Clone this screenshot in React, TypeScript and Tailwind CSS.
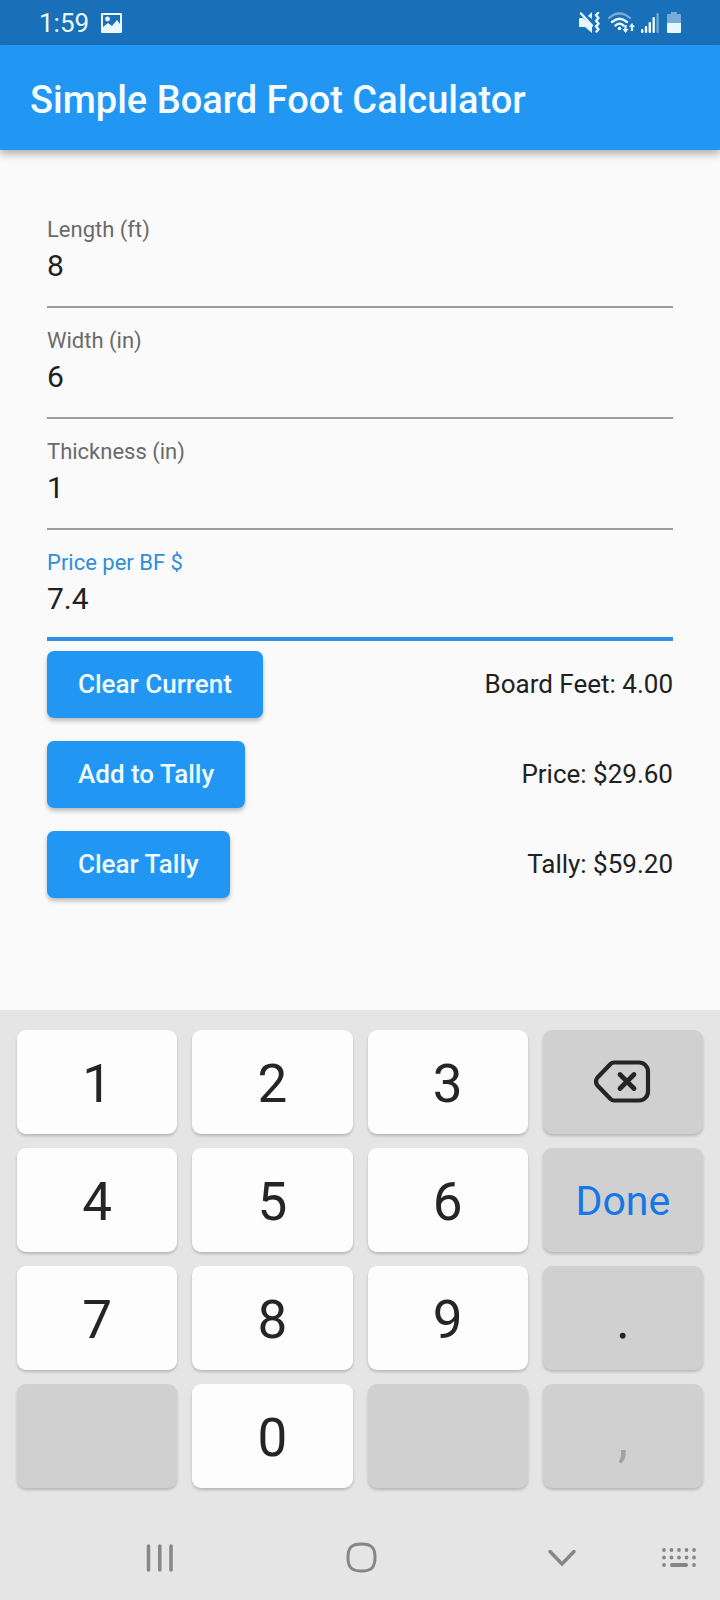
import { useState } from "react";
import clsx from "clsx";

const fields = ["Length (ft)", "Width (in)", "Thickness (in)", "Price per BF $"];

const keys = ["1", "2", "3", "back", "4", "5", "6", "Done", "7", "8", "9", ".", "", "0", "", ","];

function StatusBar() {
  return (
    <div className="flex h-[45px] items-center justify-between bg-[#1a70b8] pr-[39px] pl-[39px] text-[#e9f7fe]">
      <div className="flex items-center gap-3">
        <span className="text-[26px] leading-8">1:59</span>
        <svg width="21" height="20" viewBox="0 0 21 20" fill="currentColor" aria-hidden="true">
          <path
            fillRule="evenodd"
            d="M1 0h19a1 1 0 0 1 1 1v18a1 1 0 0 1-1 1H1a1 1 0 0 1-1-1V1a1 1 0 0 1 1-1Zm1 2v12l5-4 4 3 5-6 3 4V2H2Z"
          />
          <circle cx="6.5" cy="6" r="2.4" />
        </svg>
      </div>
      <div className="flex items-center gap-[6px]">
        {/* muted, vibrate */}
        <svg className="mr-[2px]" width="21" height="21" viewBox="0 0 21 21" fill="currentColor" aria-hidden="true">
          <path d="M1 6h3l9 8v7l-7-6H1a1 1 0 0 1-1-1V7a1 1 0 0 1 1-1ZM13 0v7L9 4Z" />
          <path
            d="M2 1.500l11 12M19 1l-2 2.200 2.500 2.800-2.500 2.800 2.500 2.800-2.500 2.800 2.500 2.800-2 2.300"
            fill="none"
            stroke="currentColor"
            strokeWidth="2.4"
            strokeLinecap="round"
            strokeLinejoin="round"
          />
        </svg>
        <svg width="27" height="22" viewBox="0 0 27 22" fill="none" stroke="currentColor" aria-hidden="true">
          <path d="M1 6q10.500-9 21 0" strokeWidth="2.200" strokeLinecap="round" opacity=".45" />
          <path d="M4 10q7.500-6.500 15 0M7.500 13.500q4-3.500 8 0" strokeWidth="2.400" strokeLinecap="round" />
          <circle cx="11.500" cy="16.500" r="1.800" fill="currentColor" stroke="none" />
          <path d="M17.500 13v6M24 19v-6" strokeWidth="2.200" />
          <path d="M14.500 17l3 4 3-4ZM21 15l3-4 3 4Z" fill="currentColor" stroke="none" />
        </svg>
        <svg width="18" height="20" viewBox="0 0 18 20" fill="currentColor" aria-hidden="true">
          <rect x="0" y="16" width="2.400" height="4" rx="1" />
          <rect x="3.800" y="13" width="2.400" height="7" rx="1" />
          <rect x="7.600" y="9" width="2.400" height="11" rx="1" />
          <rect x="11.500" y="4" width="2.400" height="16" rx="1" />
          <rect x="15.400" y="0" width="2.400" height="20" rx="1" opacity=".4" />
        </svg>
        <svg className="ml-[2px]" width="14" height="21" viewBox="0 0 14 21" fill="currentColor" aria-hidden="true">
          <path d="M4 0h6v2h3a1 1 0 0 1 1 1v8H0V3a1 1 0 0 1 1-1h3Z" opacity=".45" />
          <path d="M0 11h14v9a1 1 0 0 1-1 1H1a1 1 0 0 1-1-1Z" />
        </svg>
      </div>
    </div>
  );
}

function BackspaceIcon() {
  return (
    <svg
      width="58"
      height="44"
      viewBox="0 0 58 44"
      fill="none"
      stroke="currentColor"
      strokeWidth="4.200"
      strokeLinecap="round"
      strokeLinejoin="round"
      aria-hidden="true"
    >
      <path d="M20 2.500h25a9 9 0 0 1 9 9v20a9 9 0 0 1-9 9H20q-2 0-3.500-1.500L3.500 25.500q-3-4 0-8L16.500 4Q18 2.500 20 2.500Z" />
      <path d="M26 14.500l14 14M40 14.500l-14 14" strokeWidth="4.800" />
    </svg>
  );
}

export default function App() {
  const [values, setValues] = useState(["8", "6", "1", "7.4"]);
  const [active, setActive] = useState(3);
  const [tally, setTally] = useState(59.2);

  const [length, width, thickness, rate] = values.map((v) => Number(v) || 0);
  const boardFeet = (length * width * thickness) / 12;
  const price = boardFeet * rate;

  const update = (index: number, value: string) =>
    setValues((prev) => prev.map((v, i) => (i === index ? value : v)));

  const press = (key: string) => {
    if (key === "back") update(active, values[active].slice(0, -1));
    else if (key !== "Done") update(active, values[active] + key);
  };

  const rows = [
    { action: "Clear Current", onClick: () => setValues(["", "", "", ""]), result: `Board Feet: ${boardFeet.toFixed(2)}` },
    { action: "Add to Tally", onClick: () => setTally(tally + price), result: `Price: $${price.toFixed(2)}` },
    { action: "Clear Tally", onClick: () => setTally(0), result: `Tally: $${tally.toFixed(2)}` },
  ];

  return (
    <div className="flex min-h-screen flex-col bg-[#fafafa] font-[Roboto,sans-serif] text-[#212121]">
      <StatusBar />
      <header className="flex h-[105px] items-center bg-[#2296f3] px-[30px] shadow-[0_4px_8px_rgba(0,0,0,0.3)]">
        <h1 className="pt-1 text-[38px] leading-11 font-medium text-[#f5fcff]">Simple Board Foot Calculator</h1>
      </header>

      <main className="flex-1 px-[47px] pt-[47px] pb-12">
        {fields.map((label, i) => (
          <div
            key={label}
            className={clsx(
              "h-[111px] pt-[21px]",
              i === active ? "border-b-4 border-[#2f92e2]" : "border-b-2 border-[#9c9c9c]"
            )}
          >
            <label
              htmlFor={`field-${i}`}
              className={clsx("block text-[22px] leading-6", i === active ? "text-[#2f8fdb]" : "text-[#6a6a6a]")}
            >
              {label}
            </label>
            <input
              id={`field-${i}`}
              inputMode="decimal"
              className="mt-[6px] block h-9 w-full bg-transparent text-[30px] leading-9 outline-none"
              value={values[i]}
              onFocus={() => setActive(i)}
              onChange={(e) => update(i, e.target.value)}
            />
          </div>
        ))}

        <div className="mt-[10px] flex flex-col gap-[23px]">
          {rows.map((row) => (
            <div key={row.action} className="flex items-center justify-between">
              <button
                type="button"
                onClick={row.onClick}
                className="h-[67px] rounded-[7px] bg-[#2296f3] px-[31px] pb-[2px] text-[26px] leading-8 font-medium text-[#f0fbff] shadow-[0_3px_4px_rgba(0,0,0,0.25)]"
              >
                {row.action}
              </button>
              <span className="pb-[2px] text-[26px] leading-8">{row.result}</span>
            </div>
          ))}
        </div>
      </main>

      <footer className="bg-[#e5e5e5] pt-5">
        <div className="grid grid-cols-4 gap-x-[15px] gap-y-[14px] px-[17px]">
          {keys.map((key, i) => (
            <button
              key={i}
              type="button"
              disabled={key === "" || key === ","}
              aria-label={key === "back" ? "Backspace" : undefined}
              onClick={() => press(key)}
              className={clsx(
                "flex h-[104px] items-center justify-center rounded-[9px] shadow-[0_2px_3px_rgba(0,0,0,0.2)]",
                /^\d$/.test(key) ? "bg-[#fdfdfd]" : "bg-[#d0d0d0]",
                key === "Done" ? "pt-1 text-[41px] text-[#1677e6]" : "text-[53px]",
                key === "," && "pt-[6px] text-[#a3a3a3]",
                /^[\d.]$/.test(key) && "pt-[6px]",
                key !== "Done" && key !== "," && "text-[#252525]"
              )}
            >
              {key === "back" ? <BackspaceIcon /> : key}
            </button>
          ))}
        </div>

        <nav className="mt-[22px] flex h-[90px] items-center pt-[5px] pl-15 text-[#868686]">
          <button type="button" aria-label="Recent apps" className="flex flex-1 justify-center">
            <svg width="28" height="28" viewBox="0 0 28 28" stroke="currentColor" strokeWidth="3.500" strokeLinecap="round">
              <path d="M2.500 2v24M13.800 2v24M25 2v24" />
            </svg>
          </button>
          <button type="button" aria-label="Home" className="flex flex-1 justify-center">
            <svg width="31" height="31" viewBox="0 0 31 31" fill="none" stroke="currentColor" strokeWidth="3">
              <path d="M15.500 2C25.500 2 29 5.500 29 15.500S25.500 29 15.500 29 2 25.500 2 15.500 5.500 2 15.500 2Z" />
            </svg>
          </button>
          <button type="button" aria-label="Hide keyboard" className="flex flex-1 justify-center">
            <svg width="30" height="18" viewBox="0 0 30 18" fill="none" stroke="currentColor" strokeWidth="3.500" strokeLinecap="round">
              <path d="M3 2.500l12 12.500L27 2.500" />
            </svg>
          </button>
          <button type="button" aria-label="Switch keyboard" className="flex w-[58px]">
            <svg width="34" height="20" viewBox="0 0 34 20" fill="currentColor">
              {[2, 9.5, 17, 24.5, 32].map((x) => (
                <g key={x}>
                  <circle cx={x} cy="2" r="1.900" />
                  <circle cx={x} cy="9.500" r="1.900" />
                </g>
              ))}
              <circle cx="2" cy="17" r="1.900" />
              <rect x="8" y="15" width="18" height="4" rx="2" />
              <circle cx="32" cy="17" r="1.900" />
            </svg>
          </button>
        </nav>
      </footer>
    </div>
  );
}
